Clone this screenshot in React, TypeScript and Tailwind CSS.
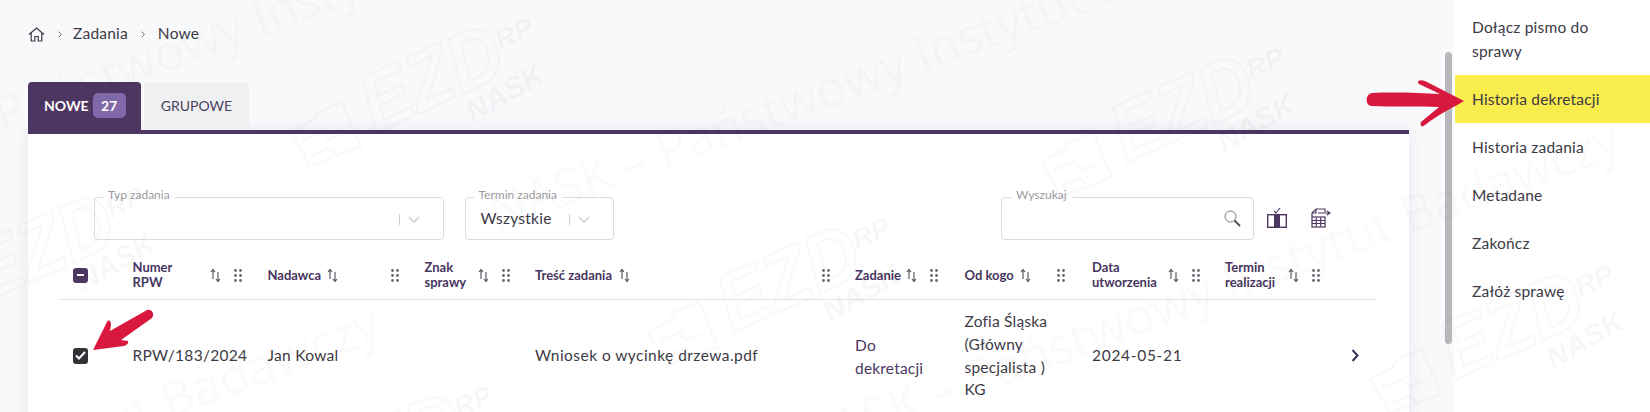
import React from "react";

const Sort = () => (
  <svg width="11" height="15" viewBox="0 0 11 15" className="shrink-0 text-[#5f5a68]" fill="none" stroke="currentColor" strokeWidth="1.2">
    <path d="M3 11V2M1 4l2-2.6L5 4" />
    <path d="M8 4v9.5M6 11l2 2.6 2-2.6" />
  </svg>
);

const Drag = () => (
  <svg width="8" height="13" viewBox="0 0 8 13" className="shrink-0 text-[#6a6672]" fill="currentColor">
    {[1.5, 6.5, 11.5].map((y) => (
      <g key={y}>
        <circle cx="1.5" cy={y} r="1.4" />
        <circle cx="6.5" cy={y} r="1.4" />
      </g>
    ))}
  </svg>
);

const Chevron = () => (
  <svg width="12" height="7" viewBox="0 0 12 7" fill="none" stroke="#cfcfcf" strokeWidth="1.6">
    <path d="M1 1l5 5 5-5" />
  </svg>
);

const Crumb = () => (
  <svg width="4" height="7" viewBox="0 0 4 7" fill="none" stroke="#6f6c76" strokeWidth="1" className="shrink-0">
    <path d="M0.6 0.6L3.4 3.5 0.6 6.4" />
  </svg>
);

const headers = [
  { lines: ["Numer", "RPW"], label: "w-[77px]", gap: "ml-[13px]" },
  { lines: ["Nadawca"], label: "w-[59.5px]", gap: "ml-[52.5px]" },
  { lines: ["Znak", "sprawy"], label: "w-[53px]", gap: "ml-[13px]" },
  { lines: ["Treść zadania"], label: "w-[84px]", gap: "ml-[192px]" },
  { lines: ["Zadanie"], label: "w-[51px]", gap: "ml-[13px]" },
  { lines: ["Od kogo"], label: "w-[55.5px]", gap: "ml-[26px]" },
  { lines: ["Data", "utworzenia"], label: "w-[76px]", gap: "ml-[12.5px]" },
  { lines: ["Termin", "realizacji"], label: "w-[63px]", gap: "ml-[12.5px]" },
];

const menu = ["Historia zadania", "Metadane", "Zakończ", "Załóż sprawę"];

const LogoMark = () => (
  <g fill="none" stroke="#000" strokeOpacity="0.022" strokeWidth="2.5">
    <path d="M0 0L22 -12L27 -20L51 -30L70 15L19 34Z" />
    <path d="M12 8L32 0L38 8L52 2M20 24L38 16L44 22" />
    <g transform="translate(84 1) rotate(-24)">
      <text fontFamily="'Liberation Sans', sans-serif" fontStyle="italic" fontWeight="700" fontSize="82" textLength="148" lengthAdjust="spacingAndGlyphs">EZD</text>
    </g>
    <g transform="translate(209 -82) rotate(-24)">
      <text fontFamily="'Liberation Sans', sans-serif" fontStyle="italic" fontWeight="700" fontSize="28" fill="#000" fillOpacity="0.035" stroke="none">RP</text>
    </g>
    <g transform="translate(182 -9) rotate(-30)">
      <text fontFamily="'Liberation Sans', sans-serif" fontStyle="italic" fontWeight="700" fontSize="30" fill="#000" fillOpacity="0.04" stroke="none">NASK</text>
    </g>
  </g>
);

const wmLines: [number, number][] = [
  [805, 460],
  [497, 232],
  [-435, 645],
  [-165, 196],
];

const logos: [number, number][] = [
  [291, 132],
  [1042, 162],
  [648, 332],
  [-98, 301],
  [250, 500],
  [1371, 379],
];

const Watermark = () => (
  <svg width="1650" height="412" viewBox="0 0 1650 412" className="absolute left-0 top-0 z-10 pointer-events-none">
    {wmLines.map(([x, y]) => (
      <text
        key={`${x}-${y}`}
        transform={`translate(${x} ${y}) rotate(-20.5)`}
        fontFamily="'Open Sans', sans-serif"
        fontSize="50"
        fill="#000"
        fillOpacity="0.02"
      >
        NASK – Państwowy Instytut Badawczy
      </text>
    ))}
    {logos.map(([x, y]) => (
      <g key={`${x}-${y}`} transform={`translate(${x} ${y})`}>
        <LogoMark />
      </g>
    ))}
  </svg>
);

const Arrows = () => (
  <svg width="1650" height="412" viewBox="0 0 1650 412" className="absolute left-0 top-0 z-20 pointer-events-none" fill="#d8183f">
    <path d="M1372 93C1395 92 1420 93 1440 94L1419 84C1416 81 1420 79 1425 81L1464 101C1452 108 1436 116 1425 125C1421 128 1420 125 1421 122L1439 107C1418 106 1395 107 1371 106C1365 105 1365 94 1372 93Z" />
    <path d="M147 310C152 309 155 314 152 318L121 340L128 341C129 343 127 345 124 346L93 350L107 322C109 319 111 321 111 325L110 331Z" />
  </svg>
);

export default function App() {
  return (
    <div className="relative flex h-[412px] w-[1650px] overflow-hidden bg-white font-['Lato','Noto_Sans',sans-serif] text-[15.5px] text-[#3d3a46]">
      <Watermark />
      <main className="relative h-full w-[1454px] shrink-0 bg-[#f8f9fb] pl-[28px] pt-[25px]">
        <nav className="flex h-[18px] items-center text-[#3d3a46]">
          <svg width="17" height="15" viewBox="0 0 17 15" fill="none" stroke="#3d3a46" strokeWidth="1.2">
            <path d="M1 7.5L8.5 1 16 7.5" />
            <path d="M3.2 6v8h3.6v-4.5h3.4V14h3.6V6" />
          </svg>
          <span className="ml-[13px]"><Crumb /></span>
          <span className="ml-[11px] tracking-[0.2px]">Zadania</span>
          <span className="ml-[13px]"><Crumb /></span>
          <span className="ml-[13px] tracking-[0.2px]">Nowe</span>
        </nav>

        <div className="mt-[39px] flex h-[48px] items-end gap-[3px]">
          <div className="flex h-[48px] w-[113px] items-center rounded-t-[4px] bg-[#4d3662] pl-[16px] pb-[1px] text-[14px] font-bold text-white">
            NOWE
            <span className="ml-[4px] flex h-[25px] w-[33px] items-center justify-center rounded-[5px] bg-[#8168a8] text-[14px]">27</span>
          </div>
          <div className="flex h-[47px] w-[105px] items-center justify-center self-start rounded-t-[4px] bg-[#eff0f2] text-[14px] text-[#4a3f5c]">GRUPOWE</div>
        </div>

        <section className="h-[300px] w-[1381px] border-t-4 border-[#4d3662] bg-white shadow-[0_0_14px_rgba(40,40,60,0.08)]">
          <div className="flex items-start pl-[66px] pt-[53px]">
            <fieldset className="h-[53px] w-[350px] rounded-[4px] border border-[#dcdcdc]">
              <legend className="ml-[8px] px-[5px] text-[12px] leading-[20px] text-[#9b9aa0]"><span className="relative -top-[2px]">Typ zadania</span></legend>
              <div className="flex h-[24px] items-center justify-end pr-[23px]">
                <span className="mr-[8px] h-[11px] w-px bg-[#cfcfcf]" />
                <Chevron />
              </div>
            </fieldset>
            <fieldset className="ml-[20.5px] h-[53px] w-[149px] rounded-[4px] border border-[#dcdcdc]">
              <legend className="ml-[8px] px-[5px] text-[12px] leading-[20px] text-[#9b9aa0]"><span className="relative -top-[2px]">Termin zadania</span></legend>
              <div className="flex h-[24px] items-center pl-[15px] pr-[23px]">
                <span className="flex-1 tracking-[0.25px]">Wszystkie</span>
                <span className="mr-[8px] h-[11px] w-px bg-[#cfcfcf]" />
                <Chevron />
              </div>
            </fieldset>
            <fieldset className="ml-[387.5px] h-[53px] w-[253px] rounded-[4px] border border-[#dcdcdc]">
              <legend className="ml-[9px] px-[5px] text-[12px] leading-[20px] text-[#9b9aa0]"><span className="relative -top-[2px]">Wyszukaj</span></legend>
              <div className="-mt-[1px] flex h-[24px] items-center justify-end pr-[12px]">
                <svg width="17" height="17" viewBox="0 0 17 17" fill="none">
                  <circle cx="6.5" cy="6.5" r="5.5" stroke="#77757c" strokeWidth="1" />
                  <path d="M10.5 10.5L16 16" stroke="#55525c" strokeWidth="2" />
                </svg>
              </div>
            </fieldset>
            <svg width="20" height="20" viewBox="0 0 20 20" className="ml-[13px] mt-[21px]" fill="none" stroke="#4d3662" strokeWidth="1.4">
              <path d="M7 3l2 2 4-5" strokeWidth="1.1" />
              <rect x="0.7" y="6.7" width="18.6" height="12.6" />
              <rect x="7" y="6.5" width="6" height="13" fill="#4d3662" stroke="none" />
            </svg>
            <svg width="20" height="20" viewBox="0 0 20 20" className="ml-[24px] mt-[21px]" fill="none" stroke="#4d3662" strokeWidth="1.2">
              <path d="M1 5l4-4h9v3" />
              <path d="M1 5v4M5 1v4H1" />
              <path d="M7 5h12M16 3l3 2-3 2" />
              <rect x="1" y="9" width="13" height="10" />
              <path d="M1 12.5h13M1 15.5h13M5.3 9.5v9M9.7 9.5v9" />
            </svg>
          </div>

          <div className="ml-[32px] mt-[11px] w-[1317px]">
            <div className="grid h-[49px] grid-cols-[72.5px_135px_157px_110.5px_320px_109.5px_127.5px_133px_152px] items-center border-b border-[#e2e2e4]">
              <div className="pl-[12.5px]">
                <div className="flex h-[15px] w-[15px] items-center justify-center rounded-[3px] bg-[#4d3662]">
                  <span className="h-[2px] w-[7px] bg-white" />
                </div>
              </div>
              {headers.map((h) => (
                <div key={h.lines[0]} className="flex items-center text-[13px] font-bold leading-[15px] text-[#47365f]">
                  <div className={`${h.label} shrink-0`}>
                    {h.lines.map((l) => (
                      <div key={l}>{l}</div>
                    ))}
                  </div>
                  <Sort />
                  <div className={h.gap}>
                    <Drag />
                  </div>
                </div>
              ))}
            </div>

            <div className="grid grid-cols-[72.5px_135px_157px_110.5px_320px_109.5px_127.5px_133px_152px] items-center py-[10px] leading-[22.75px]">
              <div className="pl-[12.5px]">
                <div className="flex h-[16px] w-[15px] items-center justify-center rounded-[3px] bg-[#333236]">
                  <svg width="11" height="9" viewBox="0 0 11 9" fill="none" stroke="#fff" strokeWidth="2">
                    <path d="M1 4.5l3 3 6-6.5" />
                  </svg>
                </div>
              </div>
              <div className="tracking-[0.3px]">RPW/183/2024</div>
              <div className="tracking-[0.3px]">Jan Kowal</div>
              <div />
              <div className="tracking-[0.45px]">Wniosek o wycinkę drzewa.pdf</div>
              <div className="pt-[3px] tracking-[0.2px] text-[#4d3662]">Do<br />dekretacji</div>
              <div className="tracking-[0.2px]">Zofia Śląska<br />(Główny<br />specjalista )<br />KG</div>
              <div className="tracking-[0.7px]">2024-05-21</div>
              <div className="flex justify-end pr-[18px]">
                <svg width="8" height="13" viewBox="0 0 8 13" fill="none" stroke="#3f3355" strokeWidth="2">
                  <path d="M1.5 1l5 5.5-5 5.5" />
                </svg>
              </div>
            </div>
          </div>
        </section>

        <div className="absolute right-[2px] top-[52px] h-[292px] w-[7px] rounded-[4px] bg-[#b8b7bc]" />
      </main>

      <aside className="h-full flex-1 pl-px pt-[3px] leading-[24px] tracking-[0.2px]">
        <div className="px-[17px] py-[12px]">Dołącz pismo do<br />sprawy</div>
        <div className="flex h-[48px] items-center bg-[#f9ec4d] px-[17px]">Historia dekretacji</div>
        {menu.map((m) => (
          <div key={m} className="flex h-[48px] items-center px-[17px]">{m}</div>
        ))}
      </aside>
      <Arrows />
    </div>
  );
}
